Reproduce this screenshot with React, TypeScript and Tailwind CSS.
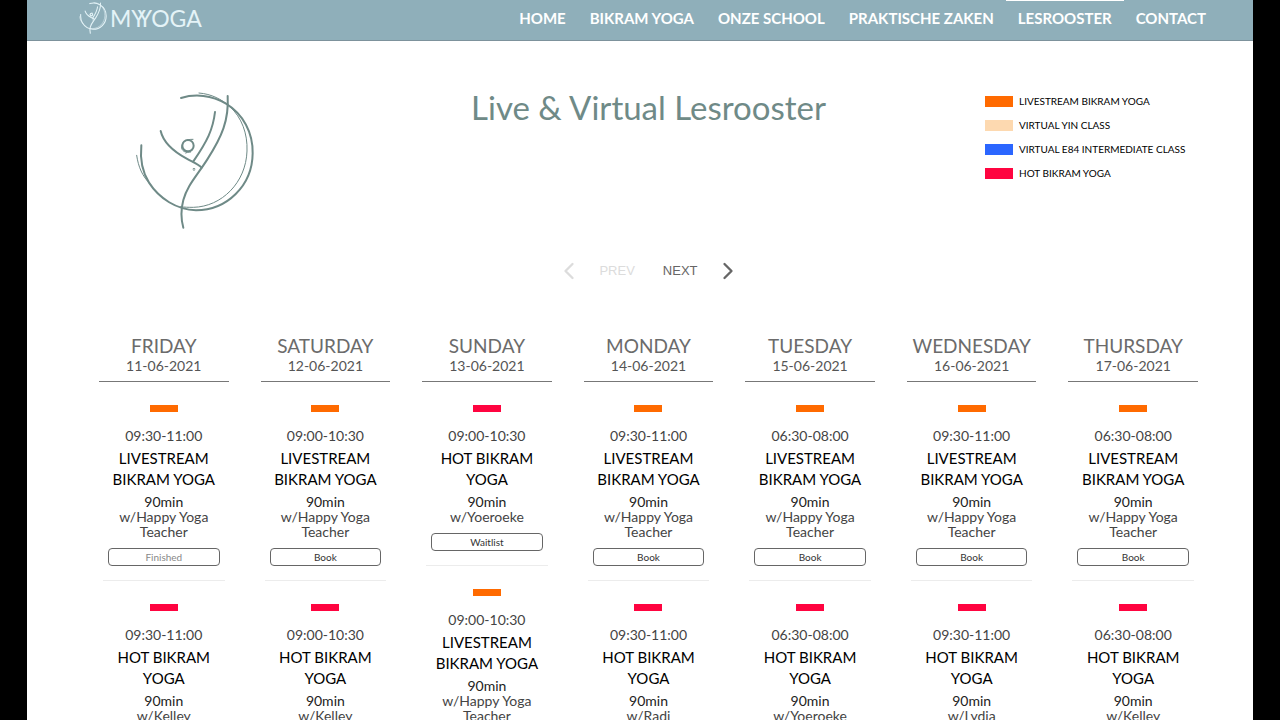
import React from "react";
import { ChevronLeft, ChevronRight } from "lucide-react";

const ORANGE = "bg-[#ff6a00]";
const RED = "bg-[#ff0440]";

const navItems = [
  "HOME",
  "BIKRAM YOGA",
  "ONZE SCHOOL",
  "PRAKTISCHE ZAKEN",
  "LESROOSTER",
  "CONTACT",
];

const legend = [
  { label: "LIVESTREAM BIKRAM YOGA", color: ORANGE },
  { label: "VIRTUAL YIN CLASS", color: "bg-[#fdd9b0]" },
  { label: "VIRTUAL E84 INTERMEDIATE CLASS", color: "bg-[#2b66ff]" },
  { label: "HOT BIKRAM YOGA", color: RED },
];

type Lesson = {
  time: string;
  hot?: boolean;
  teacher: string;
  action: string;
};

const happy = "Happy Yoga Teacher";

const days: { name: string; date: string; lessons: Lesson[] }[] = [
  {
    name: "FRIDAY",
    date: "11-06-2021",
    lessons: [
      { time: "09:30-11:00", teacher: happy, action: "Finished" },
      { time: "09:30-11:00", hot: true, teacher: "Kelley", action: "Finished" },
    ],
  },
  {
    name: "SATURDAY",
    date: "12-06-2021",
    lessons: [
      { time: "09:00-10:30", teacher: happy, action: "Book" },
      { time: "09:00-10:30", hot: true, teacher: "Kelley", action: "Book" },
    ],
  },
  {
    name: "SUNDAY",
    date: "13-06-2021",
    lessons: [
      { time: "09:00-10:30", hot: true, teacher: "Yoeroeke", action: "Waitlist" },
      { time: "09:00-10:30", teacher: happy, action: "Book" },
    ],
  },
  {
    name: "MONDAY",
    date: "14-06-2021",
    lessons: [
      { time: "09:30-11:00", teacher: happy, action: "Book" },
      { time: "09:30-11:00", hot: true, teacher: "Radi", action: "Book" },
    ],
  },
  {
    name: "TUESDAY",
    date: "15-06-2021",
    lessons: [
      { time: "06:30-08:00", teacher: happy, action: "Book" },
      { time: "06:30-08:00", hot: true, teacher: "Yoeroeke", action: "Book" },
    ],
  },
  {
    name: "WEDNESDAY",
    date: "16-06-2021",
    lessons: [
      { time: "09:30-11:00", teacher: happy, action: "Book" },
      { time: "09:30-11:00", hot: true, teacher: "Lydia", action: "Book" },
    ],
  },
  {
    name: "THURSDAY",
    date: "17-06-2021",
    lessons: [
      { time: "06:30-08:00", teacher: happy, action: "Book" },
      { time: "06:30-08:00", hot: true, teacher: "Kelley", action: "Book" },
    ],
  },
];

// dancer inside an open circle, used in the header and next to the title
function Emblem({ className, weight }: { className: string; weight: number }) {
  return (
    <svg
      viewBox="45 35 360 420"
      className={className}
      fill="none"
      stroke="currentColor"
      strokeWidth={weight}
      strokeLinecap="round"
      aria-hidden="true"
    >
      <path d="M183 56C225 43 275 47 318 73C370 105 399 160 398 222C397 320 320 393 228 393C170 391 118 358 87 310C66 276 60 238 64 198" />
      <path
        strokeWidth={weight / 2}
        d="M237 41C275 44 305 60 330 82C365 115 383 162 381 215C378 310 305 382 220 384C205 384 194 384 182 382M50 228C55 262 66 290 92 316"
      />
      <path d="M323 50C327 122 306 172 262 240C230 290 202 318 190 362C182 392 183 420 190 445" />
      <path d="M285 98C279 150 262 185 220 246" />
      <path d="M122 155C130 190 158 215 200 238C220 249 234 254 245 265" />
      <circle cx="204" cy="199" r="17" />
      <path
        strokeWidth={weight / 2}
        d="M219 180C196 179 184 190 185 206C187 217 198 221 212 218M198 222L202 218"
      />
      <circle cx="222" cy="270" r="1" />
    </svg>
  );
}

function LessonCard({ lesson }: { lesson: Lesson }) {
  return (
    <article className="mx-1 flex flex-col items-center border-b border-[#ececec] px-[5px] pt-[23px] pb-[14px] text-center">
      <span className={`h-[7px] w-7 ${lesson.hot ? RED : ORANGE}`} />
      <p className="mt-4 text-[14px] leading-4 text-[#444]">{lesson.time}</p>
      <h3 className="mt-1 text-[15px] leading-[21px] text-black">
        {lesson.hot ? "HOT BIKRAM YOGA" : "LIVESTREAM BIKRAM YOGA"}
      </h3>
      <p className="mt-1 text-[14px] leading-[15px] text-[#222]">90min</p>
      <p className="text-[14px] leading-[15px] text-[#444]">
        w/{lesson.teacher}
      </p>
      <button
        type="button"
        disabled={lesson.action === "Finished"}
        className="mt-[9px] h-[18px] w-full rounded-[4px] border border-[#666] text-[10px] leading-4 text-[#333] disabled:text-[#888]"
      >
        {lesson.action}
      </button>
    </article>
  );
}

export default function App() {
  return (
    <div className="min-h-screen bg-black px-[27px] font-['Lato',sans-serif]">
      <div className="min-h-screen bg-white">
        <header className="flex h-[41px] items-start justify-between border-b border-[#7d929c] bg-[#8fafba] pr-[35px] pl-[52px] text-white">
          <a href="#" className="flex items-center pt-[2px] text-[#e4f3f7]">
            <Emblem className="h-8 w-7" weight={14} />
            <span className="pl-[3px] text-[23px] leading-8">
              MY<span className="-ml-2">YOGA</span>
            </span>
          </a>
          <nav className="flex">
            {navItems.map((item) => (
              <a
                key={item}
                href="#"
                className={`border-t px-3 pt-[7px] text-[15px] leading-5 font-bold ${
                  item === "LESROOSTER" ? "border-white" : "border-transparent"
                }`}
              >
                {item}
              </a>
            ))}
          </nav>
        </header>

        <main className="pr-[55px] pl-[72px]">
          <section className="grid grid-cols-[1fr_auto_1fr] pt-12">
            <Emblem className="mt-[2px] ml-9 h-[140px] w-[120px] text-[#6f8a87]" weight={6} />
            <h1 className="text-[33px] leading-9 text-[#6f8a87]">
              Live &amp; Virtual Lesrooster
            </h1>
            <ul className="w-[213px] justify-self-end">
              {legend.map((item) => (
                <li key={item.label} className="flex h-6 items-center gap-[6px]">
                  <span className={`h-[11px] w-7 shrink-0 ${item.color}`} />
                  <span className="text-[10px] whitespace-nowrap text-black">
                    {item.label}
                  </span>
                </li>
              ))}
            </ul>
          </section>

          <div className="mt-7 flex h-6 items-center justify-center gap-7 font-['Liberation_Sans',sans-serif] text-[13px]">
            <button type="button" disabled className="flex items-center gap-4 text-[#dcdcdc]">
              <ChevronLeft size={28} strokeWidth={2} />
              PREV
            </button>
            <button type="button" className="flex items-center gap-4 text-[#666]">
              NEXT
              <ChevronRight size={28} strokeWidth={2} />
            </button>
          </div>

          <section className="mt-[51px] grid grid-cols-7 gap-8">
            {days.map((day) => (
              <div key={day.name}>
                <div className="flex flex-col items-center border-b border-[#777] pb-[7px] text-[#6b6b6b]">
                  <h2 className="text-[19px] leading-6">{day.name}</h2>
                  <p className="text-[14px] leading-4 text-[#555]">{day.date}</p>
                </div>
                {day.lessons.map((lesson, i) => (
                  <LessonCard key={i} lesson={lesson} />
                ))}
              </div>
            ))}
          </section>
        </main>
      </div>
    </div>
  );
}
